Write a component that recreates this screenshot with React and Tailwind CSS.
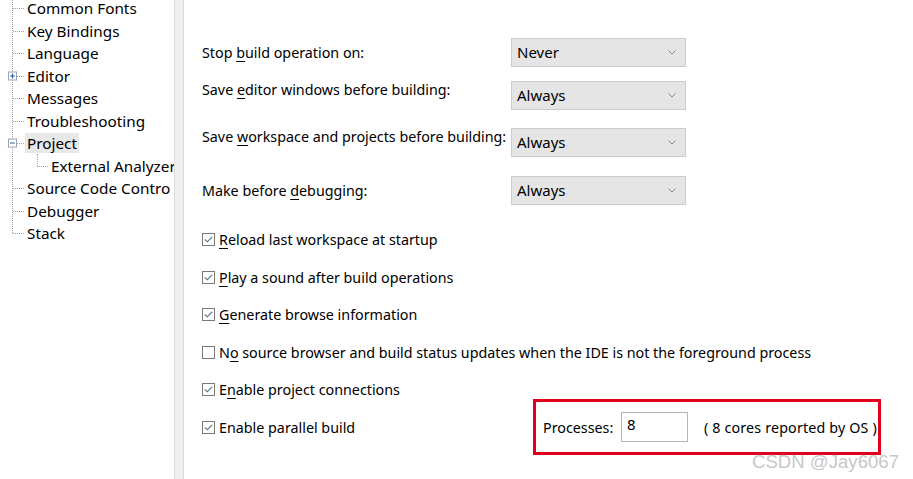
import React from "react";

const treeItems = [
  { label: "Common Fonts" },
  { label: "Key Bindings" },
  { label: "Language" },
  { label: "Editor", box: "plus" },
  { label: "Messages" },
  { label: "Troubleshooting" },
  { label: "Project", box: "minus", selected: true },
  { label: "External Analyzer", child: true },
  { label: "Source Code Contro" },
  { label: "Debugger" },
  { label: "Stack", last: true },
];

function Box({ kind }) {
  return (
    <span className="absolute left-[8px] top-1/2 -translate-y-1/2 w-[9px] h-[9px] border border-[#9aa4b6] bg-white flex items-center justify-center">
      <svg width="7" height="7" viewBox="0 0 7 7">
        <path d="M1 3.5H6" stroke="#3a5aa0" strokeWidth="1.2" />
        {kind === "plus" && <path d="M3.5 1V6" stroke="#3a5aa0" strokeWidth="1.2" />}
      </svg>
    </span>
  );
}

function TreeRow({ item }) {
  return (
    <div className="relative h-[22.5px] flex items-center">
      {!item.child && (
        <span className="absolute left-[13px] w-[11px] top-1/2 border-t border-dotted border-[#a0a0a0]" />
      )}
      {item.child && (
        <>
          <span className="absolute left-[37px] top-[-1px] h-[12px] border-l border-dotted border-[#a0a0a0]" />
          <span className="absolute left-[37px] w-[11px] top-1/2 border-t border-dotted border-[#a0a0a0]" />
        </>
      )}
      {item.box && <Box kind={item.box} />}
      <span
        className={
          (item.child ? "ml-[49px] " : "ml-[25px] ") +
          "px-[2px] leading-[20px] whitespace-nowrap " +
          (item.selected ? "bg-[#e8e8e8]" : "")
        }
      >
        {item.label}
      </span>
    </div>
  );
}

function U({ children }) {
  return <span className="underline underline-offset-[3px] decoration-1">{children}</span>;
}

function Select({ value }) {
  return (
    <div className="w-[175px] h-[29px] bg-[#e5e5e5] border border-[#cccccc] flex items-center justify-between pl-[5px] pr-[9px] text-[15px]">
      <span>{value}</span>
      <svg width="8" height="5" viewBox="0 0 8 5">
        <path d="M0.5 0.5L4 4L7.5 0.5" fill="none" stroke="#8a8a8a" strokeWidth="1" />
      </svg>
    </div>
  );
}

function Check({ checked }) {
  return (
    <span className="w-[13px] h-[13px] border border-[#7a7a7a] bg-white flex items-center justify-center shrink-0">
      {checked && (
        <svg width="9" height="7" viewBox="0 0 9 7">
          <path d="M0.8 3.4L3.3 5.8L8.2 0.8" fill="none" stroke="#4e6a92" strokeWidth="1.1" />
        </svg>
      )}
    </span>
  );
}

function CheckRow({ checked, children }) {
  return (
    <div className="h-[37.5px] flex items-center gap-[4px]">
      <Check checked={checked} />
      <span className="whitespace-nowrap">{children}</span>
    </div>
  );
}

export default function App() {
  return (
    <div
      className="relative w-[913px] h-[479px] bg-white overflow-hidden flex text-black"
      style={{ fontFamily: '"Noto Sans", "Segoe UI", sans-serif' }}
    >
      {/* Tree sidebar */}
      <div className="relative w-[174px] shrink-0 overflow-hidden text-[15.3px]">
        <span className="absolute left-[12px] top-0 h-[233px] border-l border-dotted border-[#a0a0a0]" />
        <div className="mt-[-3px]">
          {treeItems.map((it) => (
            <TreeRow key={it.label} item={it} />
          ))}
        </div>
      </div>
      {/* splitter */}
      <div className="w-[10px] shrink-0 bg-[#f0f0f0] border-l border-r border-[#dcdcdc]" />

      {/* Main */}
      <div className="flex-1 pl-[18px] pt-[38px] text-[14.3px]">
        <div className="flex items-center h-[29px]">
          <div className="w-[309px]">
            Stop <U>b</U>uild operation on:
          </div>
          <Select value="Never" />
        </div>
        <div className="flex items-start h-[29px] mt-[14px]">
          <div className="w-[309px] mt-[-2px]">
            Save <U>e</U>ditor windows before building:
          </div>
          <Select value="Always" />
        </div>
        <div className="flex items-start h-[29px] mt-[18px]">
          <div className="w-[309px] mt-[-2px] whitespace-nowrap">
            Save <U>w</U>orkspace and projects before building:
          </div>
          <Select value="Always" />
        </div>
        <div className="flex items-center h-[29px] mt-[19px]">
          <div className="w-[309px]">
            Make before <U>d</U>ebugging:
          </div>
          <Select value="Always" />
        </div>

        <div className="mt-[16px]">
          <CheckRow checked>
            <U>R</U>eload last workspace at startup
          </CheckRow>
          <CheckRow checked>
            <U>P</U>lay a sound after build operations
          </CheckRow>
          <CheckRow checked>
            <U>G</U>enerate browse information
          </CheckRow>
          <CheckRow checked={false}>
            N<U>o</U> source browser and build status updates when the IDE is not the foreground process
          </CheckRow>
          <CheckRow checked>
            E<U>n</U>able project connections
          </CheckRow>
          <div className="h-[37.5px] flex items-center">
            <div className="w-[331px] flex items-center gap-[4px]">
              <Check checked />
              <span>Enable parallel build</span>
            </div>
            <div className="w-[348px] h-[56px] border-[3px] border-[#e0001b] flex items-center pl-[7px] whitespace-nowrap">
              <span className="w-[78px]">Processes:</span>
              <div className="w-[67px] h-[30px] border border-[#b4b4b4] bg-white pl-[5px] flex items-start text-[15px]">
                8
              </div>
              <span className="ml-[16px] tracking-[0.15px]">( 8 cores reported by OS )</span>
            </div>
          </div>
        </div>
      </div>

      {/* watermark */}
      <div
        className="absolute left-[752px] top-[448px] text-[18.6px] text-[#c8c8c8] whitespace-nowrap"
        style={{ fontFamily: '"Liberation Sans", Arial, sans-serif', textShadow: "0 0 1px #fff" }}
      >
        CSDN @Jay6067
      </div>
    </div>
  );
}
